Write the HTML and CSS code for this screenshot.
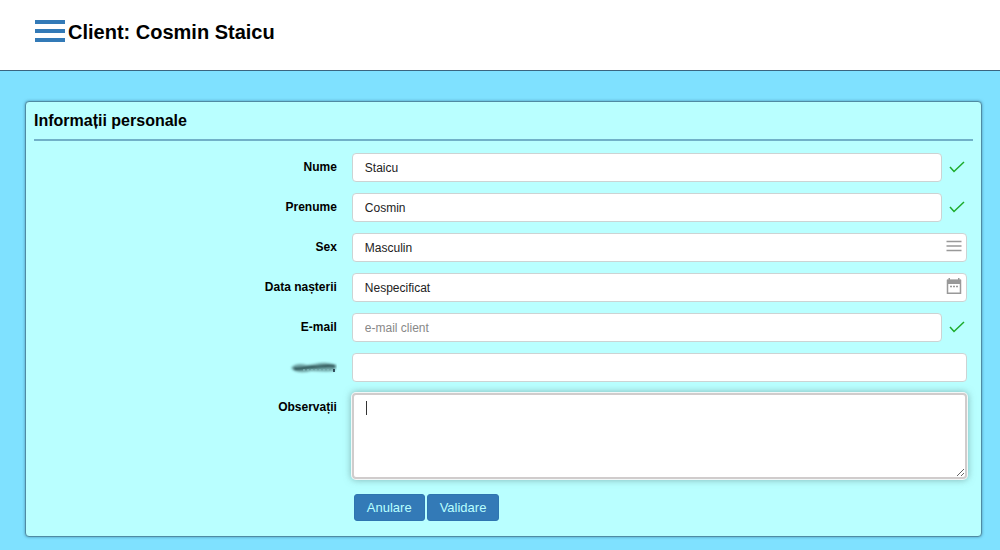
FILE: index.html
```html
<!DOCTYPE html>
<html lang="ro">
<head>
<meta charset="utf-8">
<meta name="viewport" content="width=device-width, initial-scale=1">
<title>Client: Cosmin Staicu</title>
<link rel="stylesheet" href="styles.css">
</head>
<body>
<header class="topbar">
  <button class="menu" type="button" aria-label="Meniu">
    <svg width="30" height="24" viewBox="0 0 30 24"><path d="M0 0h30v4H0zM0 9h30v4H0zM0 18h30v4H0z" fill="#337ab7"/></svg>
  </button>
  <h1 class="title">Client: Cosmin Staicu</h1>
</header>
<main class="page">
  <section class="card">
    <h2 class="card-title">Informații personale</h2>
    <form class="form">
      <div class="row">
        <label class="label" for="nume">Nume</label>
        <div class="field">
          <input class="control" id="nume" type="text" value="Staicu">
          <svg class="check" width="16" height="12" viewBox="0 0 16 12"><path d="M1 6l4 4.500L15 1" /></svg>
        </div>
      </div>
      <div class="row">
        <label class="label" for="prenume">Prenume</label>
        <div class="field">
          <input class="control" id="prenume" type="text" value="Cosmin">
          <svg class="check" width="16" height="12" viewBox="0 0 16 12"><path d="M1 6l4 4.500L15 1" /></svg>
        </div>
      </div>
      <div class="row">
        <label class="label" for="sex">Sex</label>
        <div class="field">
          <select class="control" id="sex"><option>Masculin</option><option>Feminin</option></select>
          <svg class="inner-icon" width="16" height="16" viewBox="0 0 16 16"><path d="M0.500 3.500h15M0.500 8h15M0.500 12.500h15" fill="none" stroke="#999" stroke-width="1.500"/></svg>
        </div>
      </div>
      <div class="row">
        <label class="label" for="data">Data nașterii</label>
        <div class="field">
          <input class="control" id="data" type="text" value="Nespecificat">
          <svg class="inner-icon" width="16" height="16" viewBox="0 0 16 16"><path d="M1.500 2.500h13v12.700h-13z" fill="none" stroke="#999" stroke-width="1.500"/><path d="M1 1.500h14V6H1zM2.500 0H4v3H2.500zM12 0h1.500v3H12z" fill="#999"/><path d="M4 8.500h8" stroke="#999" stroke-width="1.500" stroke-dasharray="2 1"/></svg>
        </div>
      </div>
      <div class="row">
        <label class="label" for="email">E-mail</label>
        <div class="field">
          <input class="control" id="email" type="email" placeholder="e-mail client">
          <svg class="check" width="16" height="12" viewBox="0 0 16 12"><path d="M1 6l4 4.500L15 1" /></svg>
        </div>
      </div>
      <div class="row">
        <label class="label label-smudge" for="ascuns" aria-label="Ascuns">
          <svg width="51" height="14" viewBox="0 0 51 14">
            <defs><filter id="soft" x="-10%" y="-30%" width="120%" height="160%"><feGaussianBlur stdDeviation="0.9"/></filter></defs>
            <g filter="url(#soft)">
              <path d="M5 7C8 3 14 2 21 4C28 4 34 1 41 2C46 3 49 3 51 5L48 10C41 11 33 10 25 10C17 12 9 12 5 7Z" fill="#3c6668" opacity=".6"/>
              <path d="M8 7.500C13 9 20 6 27 6S41 4 49 5" fill="none" stroke="#1d4143" stroke-width="2"/>
            </g>
            <path d="M17 9h30" stroke="#8cc5c6" stroke-width="1" stroke-dasharray="2 2"/>
            <path d="M48 8v3" stroke="#123" stroke-width="1.500"/>
          </svg>
        </label>
        <div class="field"><input class="control" id="ascuns" type="text"></div>
      </div>
      <div class="row">
        <label class="label" for="obs">Observații</label>
        <div class="field">
          <textarea class="control area" id="obs"></textarea>
          <span class="caret"></span>
        </div>
      </div>
      <div class="row">
        <div class="label"></div>
        <div class="actions">
          <button class="btn" type="button">Anulare</button>
          <button class="btn" type="button">Validare</button>
        </div>
      </div>
    </form>
  </section>
</main>
</body>
</html>
```
FILE: styles.css
```css
* {
  box-sizing: border-box;
}

body {
  margin: 0;
  min-height: 100vh;
  background: #7fe1ff;
  color: #000;
  font-family: "Liberation Sans", Arial, sans-serif;
  font-size: 12px;
}

svg {
  display: block;
}

.topbar {
  display: flex;
  align-items: center;
  gap: 3px;
  height: 71px;
  padding: 0 35px;
  padding-bottom: 7px;
  background: #fff;
  border-bottom: 1px solid #3a6580;
}

.menu {
  padding: 0;
  border: 0;
  background: none;
}

.title {
  margin: 0;
  font-size: 20px;
  line-height: 24px;
}

.page {
  padding: 30px 18px 13px 25px;
}

.card {
  padding: 8px;
  padding-bottom: 15px;
  background: #b9ffff;
  border: 1px solid #4f8ba3;
  border-radius: 4px;
  box-shadow: 0 0 3px rgba(40, 90, 120, 0.6);
}

.card-title {
  margin: 0;
  padding-bottom: 7px;
  border-bottom: 2px solid #71b1c8;
  font-size: 16px;
  line-height: 22px;
}

.form {
  display: flex;
  flex-direction: column;
  gap: 11px;
  padding: 12px 6px 0 0;
}

.row {
  display: grid;
  grid-template-columns: minmax(0, 32fr) minmax(0, 65fr);
  column-gap: 15px;
}

.label {
  text-align: right;
  font-weight: bold;
  line-height: 28px;
}

.label-smudge {
  display: flex;
  justify-content: flex-end;
  align-items: center;
}

.field {
  position: relative;
  display: flex;
  align-items: center;
}

.control {
  flex: 1;
  min-width: 0;
  height: 29px;
  margin: 0;
  padding: 0 12px;
  border: 1px solid #ccd3d3;
  border-radius: 4px;
  background: #fff;
  color: #222;
  font: inherit;
  appearance: none;
  outline: 0;
}

.control::placeholder {
  color: #888;
}

.area {
  height: 86px;
  padding: 8px 12px;
  border: 2px solid #d0cccc;
  box-shadow: 0 0 0 1px #f2f8f8, 0 0 7px 1px rgba(90, 130, 130, 0.6);
  resize: vertical;
}

.check {
  margin: 0 2px 2px 7px;
  fill: none;
  stroke: #1cab2b;
  stroke-width: 1.5;
}

.inner-icon {
  position: absolute;
  top: 5px;
  right: 5px;
  pointer-events: none;
}

.caret {
  position: absolute;
  top: 8px;
  left: 14px;
  width: 1px;
  height: 14px;
  background: #333;
}

.actions {
  display: flex;
  gap: 2px;
  padding: 4px 2px 0;
}

.btn {
  height: 27px;
  padding: 0 12px;
  border: 1px solid #2e75b0;
  border-radius: 3px;
  background: #337ab7;
  color: #b9ffff;
  font-family: inherit;
  font-size: 13px;
}
```
